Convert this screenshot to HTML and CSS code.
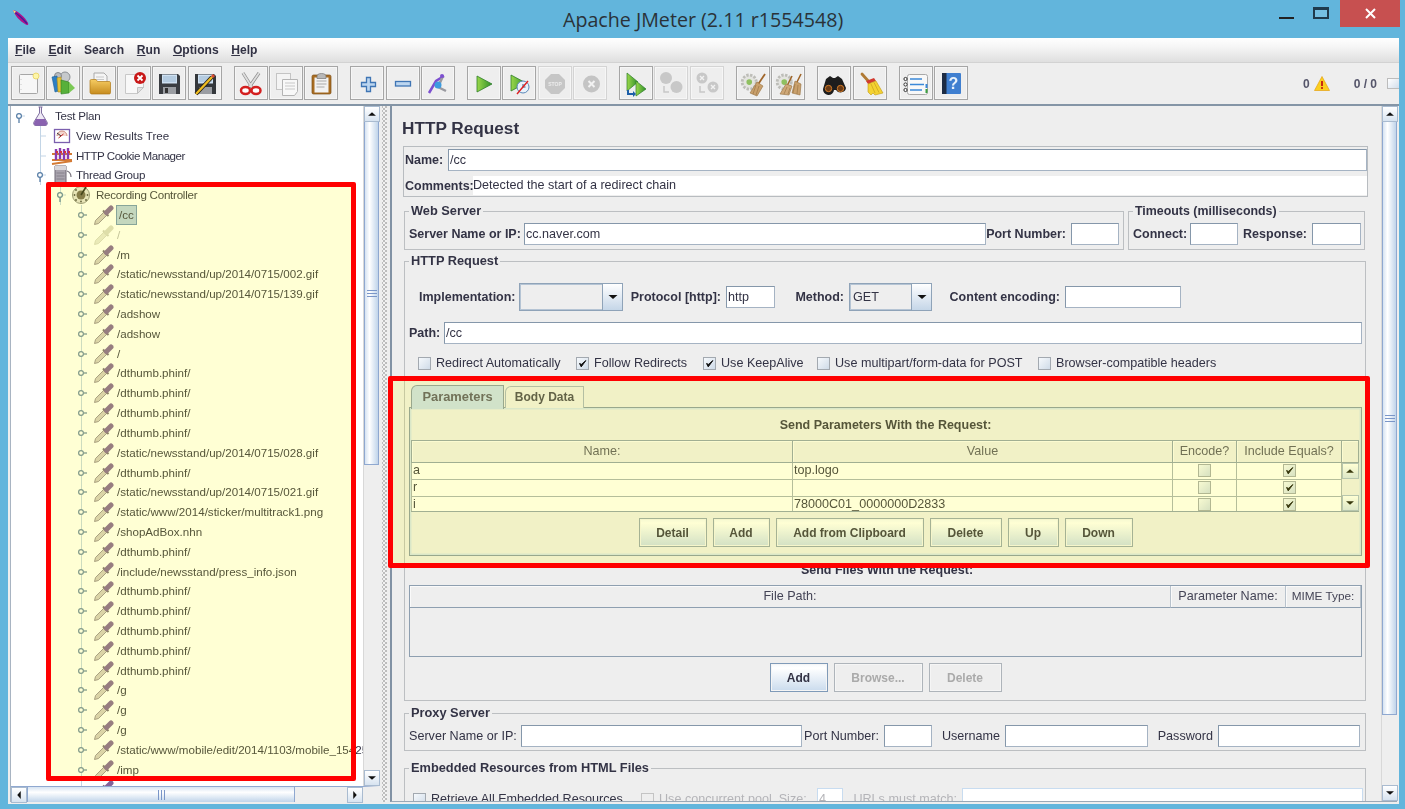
FILE: index.html
```html
<!DOCTYPE html>
<html lang="en">
<head>
<meta charset="utf-8">
<title>Apache JMeter (2.11 r1554548)</title>
<link rel="stylesheet" href="styles.css">
</head>
<body>
<svg class="defs" width="0" height="0" aria-hidden="true">
  <defs>
    <linearGradient id="gGreen" x1="0" y1="0" x2="1" y2="0"><stop offset="0" stop-color="#9ad84a"/><stop offset="1" stop-color="#2f8f2a"/></linearGradient>
    <linearGradient id="gFolder" x1="0" y1="0" x2="0" y2="1"><stop offset="0" stop-color="#f6cc62"/><stop offset="1" stop-color="#c68b1e"/></linearGradient>
    <symbol id="dropper" viewBox="0 0 22 20">
      <path d="M2.500 19.500L3.500 15.500 12 7 15 10 6.500 18.500Z" fill="#d4ccc8" stroke="#8f8592" stroke-width=".9"/>
      <path d="M11 5.500l5.500 5.500" stroke="#74697c" stroke-width="2"/>
      <path d="M14.500 7.500l4.500-4.500" stroke="#82639a" stroke-width="5" stroke-linecap="round"/>
    </symbol>
    <symbol id="dropperOff" viewBox="0 0 22 20">
      <path d="M2.500 19.500L3.500 15.500 12 7 15 10 6.500 18.500Z" fill="#e6e6dc" stroke="#d4d4c8" stroke-width=".9"/>
      <path d="M11 5.500l5.500 5.500" stroke="#d0d0c6" stroke-width="2"/>
      <path d="M14.500 7.500l4.500-4.500" stroke="#d8d8cc" stroke-width="5" stroke-linecap="round"/>
    </symbol>
    <symbol id="hClosed" viewBox="0 0 12 20"><path d="M8.500 10H14" stroke="#6a87a6" stroke-width="1.300"/><circle cx="6" cy="10" r="2.400" fill="#fff" stroke="#6a87a6" stroke-width="1.200"/></symbol>
    <symbol id="hOpen" viewBox="0 0 12 20"><path d="M8.500 10H14" stroke="#c3d5e6"/><path d="M6 12.500V17" stroke="#567da6" stroke-width="1.300"/><circle cx="6" cy="10" r="2.400" fill="#fff" stroke="#567da6" stroke-width="1.200"/></symbol>
    <symbol id="hLeaf" viewBox="0 0 12 20"><path d="M6 10H12" stroke="#c3d5e6"/></symbol>
    <symbol id="tick" viewBox="0 0 13 13"><path d="M3 6.500L5 10.500 10.500 3 5.300 7.500Z" fill="#111" stroke="#111" stroke-width="1.100"/></symbol>
    <symbol id="up" viewBox="0 0 16 16"><path d="M3.500 10L8 6 12.500 10Z" fill="#111"/></symbol>
    <symbol id="down" viewBox="0 0 16 16"><path d="M3.500 6L8 10 12.500 6Z" fill="#111"/></symbol>
    <symbol id="left" viewBox="0 0 16 16"><path d="M10 3.500L6 8 10 12.500Z" fill="#111"/></symbol>
    <symbol id="right" viewBox="0 0 16 16"><path d="M6 3.500L10 8 6 12.500Z" fill="#111"/></symbol>
    <symbol id="gearPale" viewBox="0 0 34 34"><circle cx="13" cy="16" r="7.500" fill="#e4e4e0" stroke="#bdbdb8" stroke-width="3" stroke-dasharray="2.500 1.500"/><circle cx="13" cy="16" r="3" fill="#8fc060"/></symbol>
  </defs>
</svg>

<header class="titlebar">
  <svg class="feather" viewBox="0 0 18 18"><path d="M1 1C6 2 13 8 16 14 17 16 15 17 13 15 8 12 3 7 1 1Z" fill="#b0128c"/><path d="M3 3.500C7 6 11 10 15 14.500" stroke="#3b1f9c" stroke-width="1.400" fill="none"/><path d="M1 1L4 2.500 2.500 4.500Z" fill="#f2e27a"/></svg>
  <span class="title-text">Apache JMeter (2.11 r1554548)</span>
  <div class="win-btns">
    <span class="win-min"></span>
    <span class="win-max"></span>
    <span class="win-close"><svg width="11" height="11" viewBox="0 0 11 11"><path d="M1 1L10 10M10 1L1 10" stroke="#fff" stroke-width="2"/></svg></span>
  </div>
</header>

<div class="app">
  <nav class="menubar">
    <span><u>F</u>ile</span><span><u>E</u>dit</span><span>Search</span><span><u>R</u>un</span><span><u>O</u>ptions</span><span><u>H</u>elp</span>
  </nav>

  <div class="toolbar">
    <div class="tgroup">
      <div class="tbtn"><svg viewBox="1 1 32 32"><rect x="8.500" y="8.500" width="18" height="19" rx="1" fill="#f7f7f7" stroke="#a6a6a6"/><path d="M10 13v.5M10 18v.5M10 23v.5" stroke="#999"/><circle cx="25" cy="10" r="3" fill="#fdf6a8" stroke="#ecd870"/></svg></div>
      <div class="tbtn"><svg viewBox="1 1 32 32"><circle cx="19" cy="11" r="5" fill="#c6c9cc" stroke="#8c9094"/><circle cx="12" cy="10" r="3.500" fill="#b9bcc0" stroke="#85898d"/><path d="M6 11l5-1 2 15-4 1Z" fill="#2c7fc4" stroke="#1c5f95" stroke-width=".6"/><path d="M11 12l4-1 1 15-4 0Z" fill="#e5c33a" stroke="#a98c20" stroke-width=".6"/><path d="M15 14l8 2v11l-8 1Z" fill="#57b03a" stroke="#2f7f24" stroke-width=".6"/><path d="M23 16l6 6-6 5Z" fill="#7bc955"/></svg></div>
      <div class="tbtn"><svg viewBox="1 1 32 32"><path d="M12 7h10l3 3v8H12Z" fill="#f5f5f5" stroke="#aaa"/><path d="M14 11h8M14 13.500h8" stroke="#c9c9c9"/><path d="M8 15c0-1 .5-1.500 1.500-1.500H14l1.500 2H27c1 0 1.500.5 1.500 1.500v9.500c0 1-.5 1.500-1.500 1.500H10c-1 0-2-.5-2-2Z" fill="url(#gFolder)" stroke="#b07a18" stroke-width=".7"/></svg></div>
      <div class="tbtn"><svg viewBox="1 1 32 32"><path d="M8.500 8.500h18v13l-6 6h-12Z" fill="#f8f8f8" stroke="#c8c8c8"/><path d="M20.500 27.500v-6h6Z" fill="#e0e0e0" stroke="#c0c0c0"/><circle cx="23" cy="12" r="6" fill="#c81818"/><path d="M20.500 9.500l5 5M25.500 9.500l-5 5" stroke="#fff" stroke-width="1.800"/></svg></div>
      <div class="tbtn"><svg viewBox="1 1 32 32"><path d="M7 8h19l2 2v18H7Z" fill="#3a3d42"/><rect x="10" y="8.500" width="15" height="9" fill="#cfe1f2"/><path d="M11 11h13M11 13h13M11 15h13" stroke="#9ab6cf"/><rect x="11" y="21" width="13" height="7" fill="#9a9da2"/><rect x="13" y="22" width="3" height="5" fill="#333"/></svg></div>
      <div class="tbtn"><svg viewBox="1 1 32 32"><path d="M7 8h19l2 2v18H7Z" fill="#34373b"/><rect x="10" y="8.500" width="15" height="9" fill="#cfe1f2"/><path d="M11 11h13M11 13h13M11 15h13" stroke="#9ab6cf"/><rect x="11" y="21" width="13" height="7" fill="#9a9da2"/><path d="M8 28l16-17" stroke="#1c1c1c" stroke-width="4"/><path d="M8 28l16-17" stroke="#f0bd22" stroke-width="2.400"/><path d="M24 11l2-2" stroke="#d84a30" stroke-width="3"/></svg></div>
    </div>
    <div class="tgroup">
      <div class="tbtn"><svg viewBox="1 1 32 32"><path d="M9 7l10 16M25 7L14 23" stroke="#8d8d8d" stroke-width="3.200"/><path d="M9 7l10 16M25 7L14 23" stroke="#dedede" stroke-width="1.800"/><ellipse cx="11.500" cy="24.500" rx="4.500" ry="3.500" fill="#fff" stroke="#d42020" stroke-width="2.500"/><ellipse cx="22" cy="24.500" rx="4.500" ry="3.500" fill="#fff" stroke="#d42020" stroke-width="2.500"/></svg></div>
      <div class="tbtn"><svg viewBox="1 1 32 32"><rect x="7.500" y="7.500" width="14" height="16" fill="#f4f4f4" stroke="#c4c4c4"/><path d="M13.500 13.500h15v12l-3 4h-12Z" fill="#f8f8f8" stroke="#b4b4b4"/><path d="M16 17h10M16 20h10M16 23h10" stroke="#c8c8c8"/></svg></div>
      <div class="tbtn"><svg viewBox="1 1 32 32"><rect x="8" y="9" width="19" height="19" rx="1.500" fill="#a96d22" stroke="#7c4e16" stroke-width=".7"/><rect x="10.500" y="11.500" width="14" height="15" fill="#f2f2f2"/><path d="M12.500 15h10M12.500 18h10M12.500 21h8" stroke="#aaa"/><path d="M13 10.500c0-2 1.500-3 4.500-3s4.500 1 4.500 3v2H13Z" fill="#b8b8b8" stroke="#777" stroke-width=".7"/></svg></div>
    </div>
    <div class="tgroup">
      <div class="tbtn"><svg viewBox="1 1 32 32"><path d="M16.500 11.500h4v5h5v4h-5v5h-4v-5h-5v-4h5Z" fill="#bcd6f0" stroke="#3f75b4" stroke-width="1.300"/></svg></div>
      <div class="tbtn"><svg viewBox="1 1 32 32"><rect x="9.500" y="15.500" width="15" height="4.500" fill="#bcd6f0" stroke="#3f75b4" stroke-width="1.300"/></svg></div>
      <div class="tbtn"><svg viewBox="1 1 32 32"><path d="M8 27l7-12 8-5" stroke="#7c4fd0" stroke-width="2.500" fill="none"/><path d="M22 10l-5 11 8 4" stroke="#9a9aa0" stroke-width="2.500" fill="none"/><circle cx="17" cy="19" r="3.500" fill="#3c9be0"/><circle cx="21" cy="10" r="2" fill="#7c4fd0"/></svg></div>
    </div>
    <div class="tgroup">
      <div class="tbtn"><svg viewBox="1 1 32 32"><path d="M10 10l15 8-15 8Z" fill="url(#gGreen)" stroke="#2d7d2a" stroke-width=".8"/></svg></div>
      <div class="tbtn"><svg viewBox="1 1 32 32"><path d="M9 9l15 8-15 8Z" fill="url(#gGreen)" stroke="#2d7d2a" stroke-width=".8"/><circle cx="21" cy="21" r="6" fill="#e8f2fb" stroke="#5a87b8"/><path d="M21 18v3h2.500" stroke="#33597f" fill="none"/><path d="M15 28l11-13" stroke="#e02020" stroke-width="1.400"/></svg></div>
      <div class="tbtn off"><svg viewBox="1 1 32 32"><path d="M13 8h8l6 6v8l-6 6h-8l-6-6v-8Z" fill="#c6c6c6"/><text x="17" y="20" class="stop-text">STOP</text></svg></div>
      <div class="tbtn off"><svg viewBox="1 1 32 32"><circle cx="18.500" cy="18" r="8.500" fill="#c4c4c4"/><path d="M15.500 15l6 6M21.500 15l-6 6" stroke="#f2f2f2" stroke-width="2"/></svg></div>
    </div>
    <div class="tgroup">
      <div class="tbtn"><svg viewBox="1 1 32 32"><path d="M8 7l11 9-11 9Z" fill="url(#gGreen)" stroke="#2d7d2a" stroke-width=".7"/><path d="M17 15l10 8-10 7Z" fill="url(#gGreen)" stroke="#2d7d2a" stroke-width=".7"/><path d="M9 24v4h5" stroke="#1d5fa8" stroke-width="2" fill="none"/><path d="M14 25l3 3-3 3Z" fill="#1d5fa8"/></svg></div>
      <div class="tbtn off"><svg viewBox="1 1 32 32"><circle cx="12" cy="12" r="6" fill="#c8c8c8"/><circle cx="22.500" cy="21" r="6" fill="#c8c8c8"/><path d="M10 20v6h5" stroke="#c8c8c8" stroke-width="1.500" fill="none"/></svg></div>
      <div class="tbtn off"><svg viewBox="1 1 32 32"><circle cx="12" cy="12" r="5.500" fill="#c8c8c8"/><path d="M10 10l4 4M14 10l-4 4" stroke="#f2f2f2" stroke-width="1.400"/><circle cx="23" cy="21" r="5.500" fill="#c8c8c8"/><path d="M21 19l4 4M25 19l-4 4" stroke="#f2f2f2" stroke-width="1.400"/><path d="M10 20v6h5" stroke="#c8c8c8" stroke-width="1.500" fill="none"/></svg></div>
    </div>
    <div class="tgroup">
      <div class="tbtn"><svg viewBox="1 1 32 32"><use href="#gearPale" x="1" y="1" width="32" height="32"/><path d="M29 8l-8 12" stroke="#a0662a" stroke-width="1.800"/><path d="M21 16l6 4-6 10-7-3Z" fill="#c9a06c" stroke="#96703f" stroke-width=".6"/><path d="M20 19l-3 9M23 20l-3 9" stroke="#96703f" stroke-width=".6"/></svg></div>
      <div class="tbtn"><svg viewBox="1 1 32 32"><use href="#gearPale" x="1" y="1" width="32" height="32"/><path d="M30 8l-5 10M21 10l-5 10" stroke="#a0662a" stroke-width="1.600"/><path d="M24 15l6 3-1 11-8-2Z" fill="#c9a06c" stroke="#96703f" stroke-width=".6"/><path d="M15 18l6 2-3 9-9-1Z" fill="#cfa878" stroke="#96703f" stroke-width=".6"/><path d="M24 18l-2 9M27 19l-1 9M16 21l-3 7M19 22l-2 6" stroke="#96703f" stroke-width=".6"/></svg></div>
    </div>
    <div class="tgroup">
      <div class="tbtn"><svg viewBox="1 1 32 32"><path d="M9 13l4-3 3 2 2 0 3-2 4 3 4 9a5.500 5.500 0 0 1-10 2h-2a5.500 5.500 0 0 1-11-1Z" fill="#1d1d1d"/><circle cx="11.500" cy="22.500" r="3.200" fill="#6a3a14" stroke="#d07a28"/><circle cx="23.500" cy="22.500" r="3.200" fill="#6a3a14" stroke="#d07a28"/></svg></div>
      <div class="tbtn"><svg viewBox="1 1 32 32"><path d="M9 8l8 9" stroke="#b07a34" stroke-width="2.800" stroke-linecap="round"/><path d="M13 15l8-3 2 3-8 3Z" fill="#d23a30"/><path d="M15 18l8-3 7 12-8 2-2-2-2 2-3-3Z" fill="#f4d232" stroke="#c09a18" stroke-width=".6"/><path d="M18 18l4 9M21 16.500l5 10" stroke="#c9a01c" stroke-width=".7"/></svg></div>
    </div>
    <div class="tgroup">
      <div class="tbtn"><svg viewBox="1 1 32 32"><rect x="8.500" y="8.500" width="20" height="20" rx="2" fill="#f8f8f8" stroke="#a8a8a8"/><circle cx="6.500" cy="13" r="1.600" fill="#fff" stroke="#333"/><circle cx="6.500" cy="18.500" r="1.600" fill="#fff" stroke="#333"/><circle cx="6.500" cy="24" r="1.600" fill="#fff" stroke="#333"/><path d="M11 13h12M11 18.500h14M11 24h12" stroke="#3a88d8" stroke-width="1.600"/><path d="M27.500 18v4" stroke="#3a88d8" stroke-width="2"/><path d="M27.500 23v4" stroke="#3aa040" stroke-width="2"/></svg></div>
      <div class="tbtn"><svg viewBox="1 1 32 32"><rect x="8" y="7" width="19" height="21" rx="1" fill="#3f7fd0"/><rect x="8" y="7" width="4.500" height="21" fill="#1d2c44"/><text x="19.500" y="23" class="help-text">?</text></svg></div>
    </div>
    <div class="status">
      <span class="status-warn">0</span>
      <svg class="warn" viewBox="0 0 16 15"><path d="M8 .5L15.500 14.500H.5Z" fill="#fbcf1e" stroke="#e5a010" stroke-width=".7"/><path d="M8 5v5" stroke="#c82a10" stroke-width="2"/><path d="M8 11v2" stroke="#c82a10" stroke-width="1.800"/></svg>
      <span class="status-count">0 / 0</span>
      <span class="status-box"></span>
    </div>
  </div>

  <main class="main">
    <aside class="treepane">
      <div class="treepane-top">
        <div class="tree">
          <div class="node root"><svg class="h"><use href="#hOpen"/></svg><svg class="ic" viewBox="0 0 22 20"><path d="M8.500 1h4M9.500 1v6L4 16c-1 2 0 3.500 2 3.500h9c2 0 3-1.500 2-3.500L11.500 7V1" fill="#efeaf5" stroke="#8070a0"/><path d="M6 13h9l2 4c.5 1.500-.5 2.500-2 2.500H6c-1.500 0-2.500-1-2-2.500Z" fill="#8a62b0"/></svg><span class="lbl tight">Test Plan</span></div>
          <div class="branch b1">
            <div class="node"><svg class="h"><use href="#hLeaf"/></svg><svg class="ic" viewBox="0 0 22 20"><rect x="3.500" y="3.500" width="15" height="13" fill="#fff" stroke="#7b5fae" stroke-width="1.300"/><path d="M6 10a5 5 0 0 1 10 0" fill="#f3d8d0" stroke="#d09080"/><path d="M7.500 12l5-4" stroke="#c02020"/><path d="M6 7l4 3" stroke="#333"/></svg><span class="lbl">View Results Tree</span></div>
            <div class="node"><svg class="h"><use href="#hLeaf"/></svg><svg class="ic" viewBox="0 0 22 20"><path d="M1 8h20M1 14h20M1 18l20-3" stroke="#d47a34" stroke-width="1.800"/><path d="M5 3v11M9 2v11M13 3v11M17 2v11" stroke="#8a3ab0" stroke-width="2.400"/><path d="M5 6h2M9 6h2M13 6h2M17 6h2" stroke="#d03040" stroke-width="2"/></svg><span class="lbl tighter">HTTP Cookie Manager</span></div>
            <div class="node"><svg class="h"><use href="#hOpen"/></svg><svg class="ic" viewBox="0 0 22 20"><path d="M4 1h11v18H4Z" fill="#a9a4ae" stroke="#6e6874"/><path d="M4 1h11v4H4Z" fill="#d8d6da"/><path d="M5.500 8h8M5.500 11h8M5.500 14h8" stroke="#7d7883" stroke-width=".8"/><path d="M16 6c3 1 4 3 4 6" stroke="#77727c" stroke-width="1.200" fill="none"/></svg><span class="lbl tight">Thread Group</span></div>
          </div>
          <div class="branch b2">
            <div class="node"><svg class="h"><use href="#hOpen"/></svg><svg class="ic" viewBox="0 0 22 20"><circle cx="10" cy="10" r="8.500" fill="#e4e0dc" stroke="#888"/><circle cx="10" cy="10" r="4.500" fill="#6e6358"/><path d="M10 10l5-8" stroke="#222" stroke-width="1.600"/><circle cx="3.500" cy="10" r=".9" fill="#444"/><circle cx="16.500" cy="10" r=".9" fill="#444"/><circle cx="10" cy="16.500" r=".9" fill="#444"/><circle cx="5" cy="5" r=".9" fill="#444"/><circle cx="5" cy="15" r=".9" fill="#444"/><circle cx="15" cy="15" r=".9" fill="#444"/></svg><span class="lbl tight">Recording Controller</span></div>
          </div>
          <div class="branch b3">
            <div class="node"><svg class="h"><use href="#hClosed"/></svg><svg class="ic"><use href="#dropper"/></svg><span class="lbl sel">/cc</span></div>
            <div class="node"><svg class="h"><use href="#hClosed"/></svg><svg class="ic"><use href="#dropperOff"/></svg><span class="lbl dim">/</span></div>
            <div class="node"><svg class="h"><use href="#hClosed"/></svg><svg class="ic"><use href="#dropper"/></svg><span class="lbl">/m</span></div>
            <div class="node"><svg class="h"><use href="#hClosed"/></svg><svg class="ic"><use href="#dropper"/></svg><span class="lbl">/static/newsstand/up/2014/0715/002.gif</span></div>
            <div class="node"><svg class="h"><use href="#hClosed"/></svg><svg class="ic"><use href="#dropper"/></svg><span class="lbl">/static/newsstand/up/2014/0715/139.gif</span></div>
            <div class="node"><svg class="h"><use href="#hClosed"/></svg><svg class="ic"><use href="#dropper"/></svg><span class="lbl">/adshow</span></div>
            <div class="node"><svg class="h"><use href="#hClosed"/></svg><svg class="ic"><use href="#dropper"/></svg><span class="lbl">/adshow</span></div>
            <div class="node"><svg class="h"><use href="#hClosed"/></svg><svg class="ic"><use href="#dropper"/></svg><span class="lbl">/</span></div>
            <div class="node"><svg class="h"><use href="#hClosed"/></svg><svg class="ic"><use href="#dropper"/></svg><span class="lbl">/dthumb.phinf/</span></div>
            <div class="node"><svg class="h"><use href="#hClosed"/></svg><svg class="ic"><use href="#dropper"/></svg><span class="lbl">/dthumb.phinf/</span></div>
            <div class="node"><svg class="h"><use href="#hClosed"/></svg><svg class="ic"><use href="#dropper"/></svg><span class="lbl">/dthumb.phinf/</span></div>
            <div class="node"><svg class="h"><use href="#hClosed"/></svg><svg class="ic"><use href="#dropper"/></svg><span class="lbl">/dthumb.phinf/</span></div>
            <div class="node"><svg class="h"><use href="#hClosed"/></svg><svg class="ic"><use href="#dropper"/></svg><span class="lbl">/static/newsstand/up/2014/0715/028.gif</span></div>
            <div class="node"><svg class="h"><use href="#hClosed"/></svg><svg class="ic"><use href="#dropper"/></svg><span class="lbl">/dthumb.phinf/</span></div>
            <div class="node"><svg class="h"><use href="#hClosed"/></svg><svg class="ic"><use href="#dropper"/></svg><span class="lbl">/static/newsstand/up/2014/0715/021.gif</span></div>
            <div class="node"><svg class="h"><use href="#hClosed"/></svg><svg class="ic"><use href="#dropper"/></svg><span class="lbl">/static/www/2014/sticker/multitrack1.png</span></div>
            <div class="node"><svg class="h"><use href="#hClosed"/></svg><svg class="ic"><use href="#dropper"/></svg><span class="lbl">/shopAdBox.nhn</span></div>
            <div class="node"><svg class="h"><use href="#hClosed"/></svg><svg class="ic"><use href="#dropper"/></svg><span class="lbl">/dthumb.phinf/</span></div>
            <div class="node"><svg class="h"><use href="#hClosed"/></svg><svg class="ic"><use href="#dropper"/></svg><span class="lbl">/include/newsstand/press_info.json</span></div>
            <div class="node"><svg class="h"><use href="#hClosed"/></svg><svg class="ic"><use href="#dropper"/></svg><span class="lbl">/dthumb.phinf/</span></div>
            <div class="node"><svg class="h"><use href="#hClosed"/></svg><svg class="ic"><use href="#dropper"/></svg><span class="lbl">/dthumb.phinf/</span></div>
            <div class="node"><svg class="h"><use href="#hClosed"/></svg><svg class="ic"><use href="#dropper"/></svg><span class="lbl">/dthumb.phinf/</span></div>
            <div class="node"><svg class="h"><use href="#hClosed"/></svg><svg class="ic"><use href="#dropper"/></svg><span class="lbl">/dthumb.phinf/</span></div>
            <div class="node"><svg class="h"><use href="#hClosed"/></svg><svg class="ic"><use href="#dropper"/></svg><span class="lbl">/dthumb.phinf/</span></div>
            <div class="node"><svg class="h"><use href="#hClosed"/></svg><svg class="ic"><use href="#dropper"/></svg><span class="lbl">/g</span></div>
            <div class="node"><svg class="h"><use href="#hClosed"/></svg><svg class="ic"><use href="#dropper"/></svg><span class="lbl">/g</span></div>
            <div class="node"><svg class="h"><use href="#hClosed"/></svg><svg class="ic"><use href="#dropper"/></svg><span class="lbl">/g</span></div>
            <div class="node"><svg class="h"><use href="#hClosed"/></svg><svg class="ic"><use href="#dropper"/></svg><span class="lbl">/static/www/mobile/edit/2014/1103/mobile_154251.jpg</span></div>
            <div class="node"><svg class="h"><use href="#hClosed"/></svg><svg class="ic"><use href="#dropper"/></svg><span class="lbl">/imp</span></div>
            <div class="node"><svg class="h"><use href="#hClosed"/></svg><svg class="ic"><use href="#dropper"/></svg><span class="lbl">/adshow</span></div>
          </div>
        </div>
        <div class="vscroll">
          <div class="sbtn"><svg><use href="#up"/></svg></div>
          <div class="vthumb vthumb-tree"><span class="vgrip"></span></div>
          <div class="strack"></div>
          <div class="sbtn"><svg><use href="#down"/></svg></div>
        </div>
      </div>
      <div class="hscroll">
        <div class="sbtn"><svg><use href="#left"/></svg></div>
        <div class="hthumb"><span class="hgrip"></span></div>
        <div class="strack"></div>
        <div class="sbtn"><svg><use href="#right"/></svg></div>
      </div>
    </aside>

    <div class="divider"></div>

    <section class="detailpane">
      <div class="detail">
        <h1 class="heading">HTTP Request</h1>
        <div class="namebox">
          <div class="name-row"><span class="b">Name:</span><span class="field">/cc</span></div>
          <div class="comment-row"><span class="b">Comments:</span><span class="comment">Detected the start of a redirect chain</span></div>
        </div>

        <div class="servers">
          <fieldset class="group web">
            <legend>Web Server</legend>
            <div class="grid-web">
              <span class="cap b">Server Name or IP:</span><span class="field">cc.naver.com</span>
              <span class="cap b">Port Number:</span><span class="field"></span>
            </div>
          </fieldset>
          <fieldset class="group timeouts">
            <legend>Timeouts (milliseconds)</legend>
            <div class="grid-time">
              <span class="cap b">Connect:</span><span class="field"></span>
              <span class="cap b">Response:</span><span class="field"></span>
            </div>
          </fieldset>
        </div>

        <fieldset class="group http">
          <legend>HTTP Request</legend>
          <div class="grid-impl">
            <span class="cap b">Implementation:</span>
            <div class="combo"><span class="combo-val"></span><span class="combo-arrow"><svg><use href="#down"/></svg></span></div>
            <span class="cap b">Protocol [http]:</span><span class="field">http</span>
            <span class="cap b">Method:</span>
            <div class="combo"><span class="combo-val">GET</span><span class="combo-arrow"><svg><use href="#down"/></svg></span></div>
            <span class="cap b">Content encoding:</span><span class="field"></span>
          </div>
          <div class="grid-path"><span class="b">Path:</span><span class="field">/cc</span></div>
          <div class="grid-checks">
            <label class="opt"><span class="chk"></span>Redirect Automatically</label>
            <label class="opt"><span class="chk"><svg><use href="#tick"/></svg></span>Follow Redirects</label>
            <label class="opt"><span class="chk"><svg><use href="#tick"/></svg></span>Use KeepAlive</label>
            <label class="opt"><span class="chk"></span>Use multipart/form-data for POST</label>
            <label class="opt"><span class="chk"></span>Browser-compatible headers</label>
          </div>

          <div class="tabs">
            <div class="tab active">Parameters</div>
            <div class="tab">Body Data</div>
          </div>
          <div class="tabpanel">
            <div class="table-title">Send Parameters With the Request:</div>
            <div class="ptable">
              <div class="th">Name:</div><div class="th">Value</div><div class="th">Encode?</div><div class="th">Include Equals?</div><div class="th"></div>
              <div class="td">a</div><div class="td">top.logo</div><div class="td cc"><span class="chk"></span></div><div class="td cc"><span class="chk"><svg><use href="#tick"/></svg></span></div>
              <div class="ptable-sb">
                <div class="sbtn"><svg><use href="#up"/></svg></div>
                <div class="strack"></div>
                <div class="sbtn"><svg><use href="#down"/></svg></div>
              </div>
              <div class="td">r</div><div class="td"></div><div class="td cc"><span class="chk"></span></div><div class="td cc"><span class="chk"><svg><use href="#tick"/></svg></span></div>
              <div class="td">i</div><div class="td">78000C01_0000000D2833</div><div class="td cc"><span class="chk"></span></div><div class="td cc"><span class="chk"><svg><use href="#tick"/></svg></span></div>
            </div>
            <div class="btnrow params-btns">
              <button class="btn w-detail">Detail</button>
              <button class="btn w-add">Add</button>
              <button class="btn w-clip">Add from Clipboard</button>
              <button class="btn w-del">Delete</button>
              <button class="btn w-up">Up</button>
              <button class="btn w-detail">Down</button>
            </div>
          </div>

          <div class="files-title">Send Files With the Request:</div>
          <div class="ftable">
            <div class="fth">File Path:</div><div class="fth">Parameter Name:</div><div class="fth">MIME Type:</div>
          </div>
          <div class="btnrow files-btns">
            <button class="btn w-add2">Add</button>
            <button class="btn off w-browse">Browse...</button>
            <button class="btn off w-del2">Delete</button>
          </div>
        </fieldset>

        <fieldset class="group proxy">
          <legend>Proxy Server</legend>
          <div class="grid-proxy">
            <span class="cap">Server Name or IP:</span><span class="field"></span>
            <span class="cap">Port Number:</span><span class="field"></span>
            <span class="cap">Username</span><span class="field"></span>
            <span class="cap">Password</span><span class="field"></span>
          </div>
        </fieldset>

        <fieldset class="group embed">
          <legend>Embedded Resources from HTML Files</legend>
          <div class="grid-embed">
            <label class="opt"><span class="chk"></span>Retrieve All Embedded Resources</label>
            <label class="opt dis"><span class="chk"></span>Use concurrent pool. Size:</label>
            <span class="field dis">4</span>
            <span class="cap dis">URLs must match:</span>
            <span class="field dis"></span>
          </div>
        </fieldset>
      </div>
      <div class="vscroll">
        <div class="sbtn"><svg><use href="#up"/></svg></div>
        <div class="vthumb vthumb-detail"><span class="vgrip"></span></div>
        <div class="strack"></div>
        <div class="sbtn"><svg><use href="#down"/></svg></div>
      </div>
    </section>
  </main>
</div>

<div class="callout callout-tree"></div>
<div class="callout callout-params"></div>
</body>
</html>
```

FILE: styles.css
```css
* { box-sizing: border-box; }
html, body { margin: 0; height: 100%; }
body {
  width: 1405px; height: 809px; overflow: hidden; position: relative;
  background: #62b5dc;
  font: 11.6px/14px "Liberation Sans", Arial, sans-serif;
  color: #333345;
}
.defs { position: absolute; }
.b { font-weight: 700; }

/* title bar */
.titlebar { height: 38px; position: relative; display: flex; align-items: flex-start; }
.feather { width: 18px; height: 18px; margin: 9px 0 0 12px; }
.title-text {
  position: absolute; left: 563px; top: 7px;
  font: 19.650px/25px "Open Sans", sans-serif; color: #2a3238;
}
.win-btns { position: absolute; right: 5px; top: 0; display: flex; align-items: flex-start; }
.win-min { width: 15px; height: 2px; background: #222; margin: 17px 19px 0 0; }
.win-max { width: 16px; height: 12px; border: 2px solid #1f3a4c; border-top-width: 3px; margin: 7px 11px 0 0; background: #75bfe2; }
.win-close { width: 60px; height: 27px; background: #c75050; display: flex; align-items: center; justify-content: center; }

/* frame */
.app {
  margin: 0 6px 0 8px; height: 766px; background: #eeeeee;
  display: flex; flex-direction: column; filter: blur(.3px);
}
.menubar {
  height: 25px; padding: 0 0 1px 7px; display: flex; align-items: center; gap: 12.600px;
  background: linear-gradient(#ffffff 0, #f6f6f6 35%, #dfdfdf 100%);
  border-bottom: 1px solid #d2d2d2;
  font-weight: 700; font-size: 12.100px; color: #333345;
}
.toolbar {
  height: 43px; padding: 3px 0 0 3px; display: flex; gap: 12px;
  border-bottom: 2px solid #8495a6; position: relative; flex: none;
}
.tgroup { display: flex; gap: 1.350px; }
.tbtn {
  width: 34px; height: 34px; border: 1px solid #a6a6a6; background: #eeeeee;
  box-shadow: inset 0 0 0 1px #f6f6f6;
}
.tbtn.off { border-color: #d4d4d4; }
.tbtn svg { display: block; width: 32px; height: 32px; }
.stop-text { font: 700 5px "Liberation Sans", sans-serif; fill: #ececec; text-anchor: middle; }
.help-text { font: 700 16px "Liberation Sans", sans-serif; fill: #e8f2fb; text-anchor: middle; }
.status {
  position: absolute; left: 1295px; top: 0; height: 41px; width: 96px;
  display: flex; align-items: center; font-weight: 700; font-size: 12px; color: #55556a; overflow: hidden;
}
.warn { width: 16px; height: 15px; flex: none; margin: 0 24px 0 4px; }
.status-count { white-space: nowrap; }
.status-box {
  width: 14px; height: 11px; margin-left: 10px; flex: none;
  border: 1px solid #bcbcbc; background: linear-gradient(135deg, #fff, #cfdcea);
}

/* panes */
.main { flex: 1; min-height: 0; display: flex; padding: 0 2px 2px 2px; }
.treepane {
  width: 369px; display: flex; flex-direction: column; flex: none;
  border-left: 1px solid #a8b4c2; background: #fff;
}
.treepane-top { flex: 1; min-height: 0; display: flex; }
.tree { flex: 1; min-width: 0; overflow: hidden; white-space: nowrap; }
.node { height: 19.820px; display: flex; align-items: center; margin-left: -7px; }
.node.root { margin-left: 2px; }
.branch { border-left: 1px solid #c3d5e6; }
.b1 { margin-left: 29px; }
.b2 { margin-left: 49px; }
.b3 { margin-left: 70px; }
.h { width: 12px; height: 20px; flex: none; overflow: visible; }
.ic { width: 22px; height: 20px; flex: none; margin-left: 5px; }
.lbl { margin-left: 3px; line-height: 14px; }
.lbl.tight { letter-spacing: -.25px; }
.lbl.tighter { letter-spacing: -.5px; }
.lbl.sel { background: #b8cfe5; border: 1px solid #6f93b8; padding: 2px 2px; margin-left: 2px; }
.lbl.dim { color: #b8b8b8; }

/* scrollbars */
.vscroll { width: 16px; flex: none; display: flex; flex-direction: column; background: #eee; border-left: 1px solid #d8d8d8; }
.hscroll { height: 16px; flex: none; display: flex; background: #eee; border-top: 1px solid #8fa8d0; border-right: 16px solid #eeeeee; }
.sbtn {
  width: 16px; height: 16px; flex: none; background: linear-gradient(#ffffff, #d7e3f0);
  border: 1px solid #a9bbd0;
}
.sbtn svg { display: block; width: 14px; height: 14px; }
.strack { flex: 1; background: #eeeeee; }
.vthumb {
  flex: none; display: flex; align-items: center; justify-content: center;
  background: linear-gradient(90deg, #d6e3f2, #ffffff 35%, #c0d4ea);
  border: 1px solid #8fa8d0; border-top: 0;
}
.vthumb-tree { height: 343px; }
.vthumb-detail { height: 593px; }
.vgrip { width: 10px; height: 7px; border-top: 1px solid #7a96c8; border-bottom: 1px solid #7a96c8; position: relative; }
.vgrip::after { content: ""; position: absolute; left: 0; right: 0; top: 2px; height: 1px; background: #7a96c8; }
.hthumb {
  width: 268px; display: flex; align-items: center; justify-content: center;
  background: linear-gradient(#d6e3f2, #ffffff 35%, #c0d4ea);
  border: 1px solid #8fa8d0; border-width: 0 1px;
}
.hgrip { width: 7px; height: 10px; border-left: 1px solid #7a96c8; border-right: 1px solid #7a96c8; position: relative; }
.hgrip::after { content: ""; position: absolute; top: 0; bottom: 0; left: 2px; width: 1px; background: #7a96c8; }
.divider {
  width: 11px; flex: none;
  background: repeating-conic-gradient(#bdbdbd 0 25%, #f2f2f2 0 50%) 0 0 / 4px 4px;
  background-clip: content-box; padding: 0 3px;
}

/* detail */
.detailpane { flex: 1; min-width: 0; display: flex; border-left: 2px solid #8192a4; border-bottom: 1px solid #9aa8b6; }
.detail { flex: 1; min-width: 0; overflow: hidden; padding-left: 11px; font-size: 12.600px; }
.detail .b { font-size: 12.500px; }
.heading { margin: 0 0 0 -1px; height: 40px; padding-top: 12px; font: 700 17.200px/20px "Liberation Sans", sans-serif; color: #333345; }

.field {
  display: block; height: 22px; background: #fff; line-height: 20px; padding: 0 1px;
  border: 1px solid #a5b3c3; border-top-color: #8597aa; border-left-color: #8597aa;
  white-space: nowrap; overflow: hidden;
}
.namebox { width: 965px; height: 51px; border: 1px solid #b8bcc0; padding-top: 2px; }
.name-row { display: grid; grid-template-columns: 43px 1fr; align-items: center; padding-left: 1px; }
.comment-row { display: grid; grid-template-columns: 68px 1fr; align-items: center; margin-top: 5px; padding-left: 1px; height: 19px; }
.comment { background: #fff; height: 19px; line-height: 19px; }

.group { margin: 0; padding: 0 0 0 4px; min-width: 0; border: 1px solid #bcbfc2; }
.group legend { margin-left: 0; padding: 0 2px; font-weight: 700; font-size: 12.800px; line-height: 14px; }
.servers { display: flex; gap: 4px; margin: 7px 0 0 1px; }
.web { width: 720px; height: 46px; }
.timeouts { width: 237px; height: 46px; }
.timeouts legend { font-size: 12.400px; }
.grid-web, .grid-time, .grid-proxy, .grid-impl { display: grid; align-items: center; }
.grid-web { grid-template-columns: 115px 462px 85px 48px; margin-top: 5px; }
.grid-time { grid-template-columns: 57px 48px 74px 49px; margin-top: 5px; }
.cap { text-align: right; padding-right: 5px; white-space: nowrap; }

.http { width: 962px; margin: 4px 0 0 1px; padding-bottom: 8px; padding-right: 3px; }
.grid-impl { grid-template-columns: 100px 104px 103px 49px 74px 83px 133px 116px; margin: 15px 0 0 10px; height: 28px; }
.combo {
  height: 28px; display: flex; background: #eeeeee; border: 1px solid #8fa3b8;
  box-shadow: inset 0 0 0 1px #b5c4d4;
}
.combo-val { flex: 1; line-height: 26px; padding-left: 3px; }
.combo-arrow { width: 20px; flex: none; border-left: 1px solid #8fa3b8; background: linear-gradient(#fff, #c5d6e8); display: flex; align-items: center; justify-content: center; }
.combo-arrow svg { width: 16px; height: 16px; }
.grid-path { display: grid; grid-template-columns: 35px 918px; align-items: center; margin-top: 11px; }
.grid-checks { display: grid; grid-template-columns: 158px 127px 114px 221px auto; margin: 10px 0 0 9px; height: 18px; align-items: center; }
.opt { display: flex; align-items: center; gap: 5px; white-space: nowrap; }
.chk {
  display: block; width: 13px; height: 13px; flex: none; border: 1px solid #a3a9b0;
  background: linear-gradient(135deg, #f6f9fc, #cfdbe8);
}
.chk svg { display: block; width: 11px; height: 11px; }

.tabs { display: flex; gap: 1px; margin: 12px 0 0 2px; height: 24px; align-items: flex-end; position: relative; z-index: 1; }
.tab {
  height: 22px; width: 79px; text-align: center; line-height: 20px; font-weight: 700; font-size: 12px; color: #444456;
  border: 1px solid #a5b3c3; border-bottom: 0; border-top-left-radius: 6px; background: #eee;
}
.tab.active { height: 24.500px; width: 93px; background: #c8ddf2; line-height: 22px; margin-bottom: -1px; border-color: #8597aa; font-size: 12.900px; color: #55556a; }
.tabpanel {
  margin-top: -1px; height: 149px; border: 1px solid #8597aa; padding: 0 1px;
  box-shadow: inset 0 0 0 1.500px #d3e2f1;
}
.table-title { height: 32px; padding-top: 10px; text-align: center; font-weight: 700; font-size: 12.500px; }
.ptable {
  display: grid; grid-template-columns: 381px 380px 64px 105px 18px; grid-template-rows: 23px 17px 17px 14px;
  width: 948px; height: 72px; overflow: hidden; background: #fff; border-bottom: 1px solid #8e9fb0;
}
.th {
  background: #eee; text-align: center; line-height: 21px; color: #555566;
  border-top: 1px solid #8e9fb0; border-left: 1px solid #8e9fb0; border-bottom: 1px solid #8e9fb0;
  box-shadow: inset 1px 1px 0 #fafafa;
}
.th:nth-child(5) { border-right: 1px solid #8e9fb0; }
.td {
  background: #fff; line-height: 15px; padding-left: 1px; overflow: hidden; white-space: nowrap;
  border-left: 1px solid #a7b1ba; border-bottom: 1px solid #a7b1ba; height: 17px;
}
.td:nth-last-child(-n+4) { border-bottom: 0; }
.td.cc { display: flex; justify-content: center; padding: 1px 0 0; }
.ptable-sb { grid-row: 2 / 5; grid-column: 5; display: flex; flex-direction: column; background: #eee; border-left: 1px solid #a7b1ba; }
.ptable-sb .sbtn { width: 17px; height: 16px; }
.btnrow { display: flex; justify-content: center; gap: 6px; margin-top: 7px; }
.params-btns { margin-top: 6px; }
.btn {
  height: 29px; padding: 0; margin: 0; font: 700 12px/14px "Liberation Sans", sans-serif; color: #333345;
  background: linear-gradient(#f4f8fc, #fff 15%, #cadbed); border: 1px solid #93a3b3; box-shadow: 0 0 0 1px #f5f5f5 inset;
}
.btn.off { background: #eeeeee; color: #aaaaaa; border-color: #aeb4ba; }
.w-detail { width: 68px; }
.w-add { width: 57px; }
.w-clip { width: 148px; }
.w-del { width: 72px; }
.w-up { width: 51px; }
.w-add2 { width: 58px; border-color: #7f9ab8; }
.w-browse { width: 89px; }
.w-del2 { width: 73px; }
.files-title { margin-top: 7px; text-align: center; font-weight: 700; padding-left: 3px; font-size: 12.500px; }
.ftable {
  display: grid; grid-template-columns: 761px 115px 75px; height: 72px; margin-top: 8px;
  border: 1px solid #8e9fb0; align-items: start;
}
.fth {
  height: 22px; text-align: center; line-height: 20px; color: #444456;
  border-bottom: 1px solid #8e9fb0; border-right: 1px solid #b8c2cc; box-shadow: inset 1px 1px 0 #fafafa;
}
.fth:last-child { font-size: 11.800px; }
.files-btns { margin-top: 6px; }

.proxy { width: 962px; height: 45px; margin: 5px 0 0 1px; }
.grid-proxy { grid-template-columns: 112px 281px 82px 48px 73px 143px 70px 142px; margin-top: 5px; }
.embed { width: 962px; height: 80px; margin: 10px 0 0 1px; }
.grid-embed { display: grid; grid-template-columns: 228px 176px 26px 119px 401px; margin-top: 13px; padding-left: 4px; align-items: center; }
.dis { color: #b4b4b8; }
.field.dis { border-color: #c8dcf0; }
.opt.dis .chk { background: #eeeeee; border-color: #c4c4c4; }

.vthumb-detail { border: 1px solid #8fa8d0; border-top: 0; }

/* callouts drawn over the screenshot */
.callout {
  position: absolute; z-index: 5; background: rgba(255, 255, 0, .17); border: 5px solid #ff0000; border-radius: 2px;
}
.callout-tree { left: 46px; top: 182px; width: 310px; height: 599px; }
.callout-params { left: 388px; top: 376px; width: 982px; height: 192px; }
```
